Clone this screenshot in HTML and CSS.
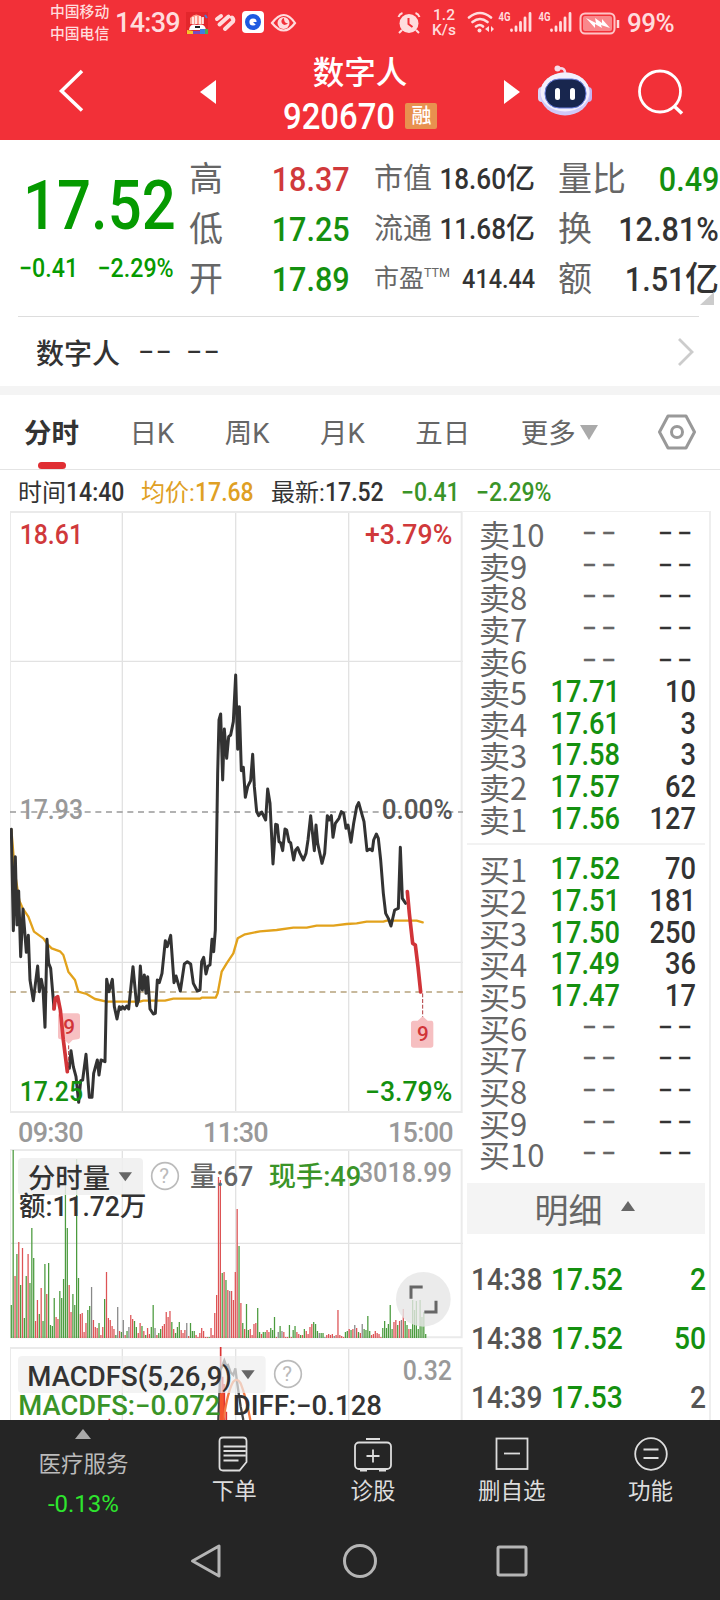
FILE: index.html
```html
<!DOCTYPE html>
<html lang="zh-CN">
<head>
    <meta charset="utf-8">
    <title>数字人 920670</title>
    <link rel="stylesheet" href="styles.css">
</head>
<body>
<header class="top">
    <div class="status">
        <div class="carrier">中国移动<br>中国电信</div>
        <div class="clock">14:39</div>
        <svg class="notif" width="112" height="24" viewBox="185 10 112 24">
            <rect x="186" y="12" width="22" height="22" fill="#e3262c"/>
            <path d="M190 18q6-7 13 0v6h-13z" fill="#ff9a8a"/>
            <path d="M193 17v7M196 16v8M200 16v8M203 17v7" stroke="#fff" stroke-width="1.5"/>
            <path d="M189 30q1-7 8-5 8-2 9 5z" fill="#fff"/>
            <path d="M195 27h5" stroke="#222" stroke-width="2"/>
            <path d="M187 34v-4l6 1v3z" fill="#f5c52c"/>
            <path d="M193 34v-3h7v3z" fill="#7a4ac0"/>
            <path d="M200 34v-5h5v5z" fill="#3f7de0"/>
            <path d="M205 34v-5h3v5z" fill="#4caf50"/>
            <path d="M205 15l2 3" stroke="#4a7ad8" stroke-width="2"/>
            <g fill="none" stroke="#ffdcdd" stroke-width="4" stroke-linecap="round">
                <path d="M217 19l4-3M219.500 24.500l9-8M225 29l8-7.500q1-2-1-4"/>
            </g>
            <rect x="242" y="11" width="22" height="22" rx="4" fill="#fff"/>
            <circle cx="253" cy="22" r="5.8" fill="none" stroke="#1f5ae0" stroke-width="4.4"/>
            <path d="M253 22h4v4" fill="#1f5ae0"/>
            <path d="M272 23q12-16 23 0-11 15-23 0z" fill="none" stroke="#ffdcdd" stroke-width="2.2"/>
            <circle cx="283.500" cy="23" r="6" fill="#ffdcdd"/>
            <path d="M284 18a3.500 3.500 0 1 0 4 5q-4 1-4-5z" fill="#f23038"/>
        </svg>
        <svg class="alarm" width="24" height="24" viewBox="397 11 24 24">
            <circle cx="409" cy="23.500" r="9.500" fill="#ffdcdd"/>
            <path d="M398.500 17q1-3 4-4M419.500 17q-1-3-4-4M402 30l-3 3M416 30l3 3" fill="none" stroke="#ffdcdd" stroke-width="2"/>
            <path d="M408.500 18v6l4 3" fill="none" stroke="#f23038" stroke-width="2"/>
        </svg>
        <div class="speed">1.2<br>K/s</div>
        <svg class="signal" width="154" height="26" viewBox="467 9 154 26">
            <g fill="none" stroke="#ffdcdd" stroke-width="2.600" stroke-linecap="round">
                <path d="M469 17.500q11-9 22 0M472.500 22q7.500-6 15 0M476 26.500q4-3 7 0"/>
            </g>
            <circle cx="479.500" cy="30.500" r="2" fill="#ffdcdd"/>
            <path d="M489 26l-4 3 4 3zM491 26l3 3-3 3z" fill="#ffdcdd"/>
            <g stroke="#ffdcdd" stroke-width="2.800" stroke-linecap="round">
                <path d="M511.500 30v.5M516 27v3.500M520.500 22.500v8M525 18v12.500M530 13.500v17"/>
                <path d="M551.500 30v.5M556 27v3.500M560.500 22.500v8M565 18v12.500M570 13.500v17"/>
            </g>
            <text class="g4" x="498.500" y="20.500" textLength="12" lengthAdjust="spacingAndGlyphs">4G</text>
            <text class="g4" x="538.500" y="20.500" textLength="12" lengthAdjust="spacingAndGlyphs">4G</text>
            <rect x="580.500" y="13.500" width="34" height="20" rx="4.500" fill="none" stroke="#ffc4c6" stroke-width="2"/>
            <rect x="583" y="16" width="29" height="15" rx="2" fill="#f9888c"/>
            <path d="M586 18l10 5-1-5 7 5v-4l8 9-9-3 1 3-7-4v4z" fill="#fff"/>
            <path d="M618 20v8" stroke="#ffdcdd" stroke-width="2.500"/>
        </svg>
        <div class="percent">99%</div>
    </div>
    <div class="titlebar">
        <svg class="back" width="30" height="44" viewBox="56 69 30 44">
            <path d="M82 71L61.500 91 82 110.500" fill="none" stroke="#fff" stroke-width="3.500"/>
        </svg>
        <svg class="prev" width="16" height="24"><path d="M16 0v24L0 12z" fill="#fff"/></svg>
        <div class="stock">
            <div class="name">数字人</div>
            <div class="code"><span class="num">920670</span><span class="tag">融</span></div>
        </div>
        <svg class="next" width="16" height="24"><path d="M0 0v24l16-12z" fill="#fff"/></svg>
        <svg class="robot" width="56" height="54" viewBox="537 63 56 54">
            <path d="M557 69q9-3 8 6" fill="none" stroke="#f4d8ea" stroke-width="2.500"/>
            <circle cx="557.500" cy="68.500" r="3" fill="#f6dcea"/>
            <rect x="538" y="87" width="8" height="15" rx="4" fill="#d8d4f8"/>
            <rect x="584" y="87" width="8" height="15" rx="4" fill="#c4b4f0"/>
            <ellipse cx="565" cy="94" rx="25" ry="21.500" fill="#cfc9f8"/>
            <ellipse cx="565" cy="92" rx="24.500" ry="19.500" fill="#f3effc"/>
            <rect x="545" y="79" width="41" height="29" rx="14" fill="#18264e" stroke="#6a7fe0"/>
            <rect x="555" y="88" width="5" height="12" rx="2.500" fill="#fff"/>
            <rect x="570" y="88" width="5" height="12" rx="2.500" fill="#fff"/>
        </svg>
        <svg class="search" width="48" height="48" viewBox="637 68 48 48">
            <circle cx="660" cy="91.500" r="20.500" fill="none" stroke="#fff" stroke-width="2.800"/>
            <path d="M674 106l8 7.500" stroke="#fff" stroke-width="3.500"/>
        </svg>
    </div>
</header>

<section class="quote">
    <div class="last">
        <div class="price"><span class="num">17.52</span></div>
        <div class="change"><span class="num">−0.41</span><span class="num right">−2.29%</span></div>
    </div>
    <dl class="col c1">
        <dt>高</dt><dd class="up"><span class="num right">18.37</span></dd>
        <dt>低</dt><dd class="down"><span class="num right">17.25</span></dd>
        <dt>开</dt><dd class="down"><span class="num right">17.89</span></dd>
    </dl>
    <dl class="col c2">
        <dt>市值</dt><dd><span class="num right">18.60</span>亿</dd>
        <dt>流通</dt><dd><span class="num right">11.68</span>亿</dd>
        <dt class="small">市盈<sup>TTM</sup></dt><dd class="small"><span class="num right">414.44</span></dd>
    </dl>
    <dl class="col c3">
        <dt>量比</dt><dd class="down"><span class="num right">0.49</span></dd>
        <dt>换</dt><dd><span class="num right">12.81%</span></dd>
        <dt>额</dt><dd><span class="num right">1.51</span>亿</dd>
    </dl>
    <i class="corner"></i>
</section>

<section class="related">
    <span>数字人</span><span class="dash">−−</span><span class="dash">−−</span>
    <svg width="18" height="30"><path d="M2 2l13 13L2 28" fill="none" stroke="#ccc" stroke-width="2.800"/></svg>
</section>

<nav class="tabs">
    <span class="active">分时</span>
    <span>日K</span>
    <span>周K</span>
    <span>月K</span>
    <span>五日</span>
    <span>更多</span>
    <svg class="more" width="18" height="15"><path d="M0 0h18L9 15z" fill="#aaa"/></svg>
    <svg class="gear" width="38" height="36" viewBox="0 0 38 36">
        <path d="M10 2h18l8.500 16L28 34H10L1.500 18z" fill="none" stroke="#999" stroke-width="3" stroke-linejoin="round"/>
        <circle cx="19" cy="18" r="5.500" fill="none" stroke="#999" stroke-width="3"/>
    </svg>
</nav>

<div class="info">
    <span>时间<b class="num">14:40</b></span>
    <span class="avg">均价:<b class="num">17.68</b></span>
    <span>最新:<b class="num">17.52</b></span>
    <span class="green"><b class="num">−0.41</b></span>
    <span class="green"><b class="num">−2.29%</b></span>
</div>

<main>
    <div class="charts">
        <!-- price line, 3 units to a pixel -->
        <svg width="453" height="602" viewBox="30 -447 1359 1806">
            <g class="grid">
                <path d="M367-447V1359M707-447V1359M1046-447V1359M30 4H1389M30 907H1389"/>
                <path class="frame" d="M30-444H1385V1356H30z"/>
            </g>
            <path d="M30 456H1389" stroke="#999" stroke-width="5" stroke-dasharray="18 14"/>
            <path d="M30 996H1389" stroke="#b7a37c" stroke-width="4.500" stroke-dasharray="18 14"/>
            <g fill="none" stroke-linejoin="round" stroke-linecap="round">
                <polyline stroke="#e2a21c" stroke-width="7" points="34,508 45,640 58,722 68,745 85,770 102,815 130,835 142,852 155,865 180,874 190,885 205,935 225,960 235,995 260,1002 285,1017 320,1025 420,1025 430,1022 495,1022 520,1016 600,1016 605,1013 647,1013 653,1000 665,935 680,910 700,880 713,835 735,823 780,814 830,810 880,803 920,803 950,797 1000,797 1040,792 1070,790 1100,785 1150,785 1160,782 1250,782 1268,787"/>
                <g stroke="#333" stroke-width="9">
                    <polyline points="34,508 40,812 46,590 51,795 56,693 62,890 69,747 79,877 85,826 90,960 100,1022 107,965 113,918 118,995 124,958 129,985 135,1102 141,838 146,910 152,925 162,1045"/>
                    <polyline points="208,1225 213,1172 220,1220 228,1250 236,1327 242,1262 248,1260 258,1183 268,1312 276,1312 281,1240 292,1200 297,1245 303,1200 315,1205 320,958 327,995 337,958 343,1040 351,1077 358,1040 363,1048 368,1040 374,1047 380,1038 386,1047 399,920 410,1037 416,1020 421,918 427,990 433,945 438,1000 443,950 450,1047 460,1062 466,1060 472,960 478,968 486,940 496,842 502,860 512,826 522,968 528,948 541,993 553,912 562,905 572,912 580,970 592,993 600,990 605,905 611,892 618,942 624,918 630,915 636,838 641,875 646,810 648,660 653,340 657,180 662,162 668,360 673,207 680,295 686,230 692,225 700,185 707,45 713,268 718,140 724,332 730,322 736,412 743,380 752,362 758,283 763,380 770,455 776,467 785,456 797,480 803,387 810,430 819,612 827,493 832,495 837,545 842,548 848,572 855,507 860,510 867,545 872,548 881,600 887,570 893,563 900,580 910,600 918,580 924,540 932,467 943,572 948,495 953,550 966,610 974,580 982,467 988,480 994,467 999,532 1006,490 1017,475 1024,455 1031,460 1038,505 1044,495 1053,547 1061,490 1070,440 1076,428 1085,460 1092,485 1101,572 1110,567 1117,572 1121,540 1129,522 1135,535 1142,600 1150,700 1157,760 1165,775 1173,798 1184,750 1195,745 1201,562 1207,715 1217,730"/>
                </g>
                <g stroke="#d13438" stroke-width="11">
                    <polyline points="162,1047 166,1015 173,1010 181,1050 190,1140 202,1235"/>
                    <polyline points="1222,695 1228,760 1238,850 1246,855 1254,920 1262,996"/>
                </g>
            </g>
            <path d="M182 1060h50q8 0 8 8v64q0 6-8 6l-14 2-12 12-12-12-12-2q-8 0-8-6v-64q0-8 8-8z" fill="#e63c41" fill-opacity=".32"/>
            <path d="M1241 1082h12l15-13 15 13h12q5 0 5 8v65q0 8-8 8h-51q-8 0-8-8v-65q0-8 8-8z" fill="#f6bfc1"/>
            <path d="M206 1156v76M1268 1000v70" stroke="#b0383c" stroke-width="3" stroke-dasharray="12 5"/>
            <text class="nine" x="190" y="1122">9</text>
            <text class="nine" x="1251" y="1144">9</text>
            <g class="axis">
                <text x="59" y="-348" textLength="190" class="up">18.61</text>
                <text x="1095" y="-348" textLength="262" class="up">+3.79%</text>
                <text x="59" y="476" textLength="190" fill="#999">17.93</text>
                <text x="1145" y="476" textLength="213" fill="#555">0.00%</text>
                <text x="59" y="1322" textLength="190" class="down">17.25</text>
                <text x="1095" y="1322" textLength="262" class="down">−3.79%</text>
            </g>
        </svg>
        <div class="times"><span>09:30</span><span>11:30</span><span>15:00</span></div>

        <!-- volume, bars are filled in by chart.js -->
        <svg width="453" height="190" viewBox="30 117 1359 570">
            <g class="grid">
                <path d="M367 117V683M707 117V683M1046 117V683M30 400H1389"/>
                <path class="frame" d="M30 120H1385V682H30z"/>
            </g>
            <g id="bars"></g>
            <rect x="54" y="144" width="375" height="111" rx="12" fill="#eee" fill-opacity=".85"/>
            <path d="M356 187h40l-20 27z" fill="#666"/>
            <circle cx="495" cy="198" r="40" class="help"/>
            <text x="478" y="219" class="q">?</text>
            <g class="axis">
                <text x="84" y="235" textLength="246" fill="#333">分时量</text>
                <text x="570" y="228" textLength="190" fill="#666">量:67</text>
                <text x="806" y="228" textLength="278" class="green">现手:49</text>
                <text x="1076" y="215" textLength="280" fill="#999">3018.99</text>
                <text x="57" y="318" textLength="382" fill="#333">额:11.72万</text>
            </g>
            <circle cx="1270" cy="568" r="82" fill="#e6e6e6" fill-opacity=".8"/>
            <path d="M1233 566v-35h35M1308 572v34h-35" fill="none" stroke="#666" stroke-width="9"/>
        </svg>

        <svg class="macd" width="453" height="73" viewBox="30 711 1359 219">
            <g class="grid">
                <path d="M367 711V930M707 711V930M1046 711V930"/>
                <path class="frame" d="M30 940V714H1385V940"/>
            </g>
            <path d="M662 711V930M668 800V930M673 822V930M679 905V930M328 926v4" stroke="#dc3434" stroke-width="5"/>
            <path d="M655 930L661 780 667 768 673 752 679 768 684 765 692 787 700 795 706 775 712 822 722 890 730 930" fill="none" stroke="#444" stroke-width="7"/>
            <path d="M670 930Q684 840 700 815 711 802 722 820 738 860 751 930" fill="none" stroke="#f47b45" stroke-width="7"/>
            <path d="M662 850V930M668 850V930" stroke="#f4552e" stroke-width="6"/>
            <rect x="54" y="738" width="743" height="111" rx="12" fill="#eee" fill-opacity=".7"/>
            <path d="M724 781h40l-20 27z" fill="#666"/>
            <circle cx="864" cy="792" r="40" class="help"/>
            <text x="847" y="813" class="q">?</text>
            <g class="axis latin">
                <text x="82" y="829" textLength="614" fill="#333">MACDFS(5,26,9)</text>
                <text x="55" y="914" textLength="606" class="green">MACDFS:−0.072</text>
                <text x="698" y="914" textLength="448" fill="#333">DIFF:−0.128</text>
            </g>
            <g class="axis"><text x="1208" y="809" textLength="148" fill="#999">0.32</text></g>
        </svg>
    </div>

    <div class="book">
        <div class="level"><span>卖10</span><i>−−</i><i>−−</i></div>
        <div class="level"><span>卖9</span><i>−−</i><i>−−</i></div>
        <div class="level"><span>卖8</span><i>−−</i><i>−−</i></div>
        <div class="level"><span>卖7</span><i>−−</i><i>−−</i></div>
        <div class="level"><span>卖6</span><i>−−</i><i>−−</i></div>
        <div class="level"><span>卖5</span><b>17.71</b><b>10</b></div>
        <div class="level"><span>卖4</span><b>17.61</b><b>3</b></div>
        <div class="level"><span>卖3</span><b>17.58</b><b>3</b></div>
        <div class="level"><span>卖2</span><b>17.57</b><b>62</b></div>
        <div class="level"><span>卖1</span><b>17.56</b><b>127</b></div>
        <hr>
        <div class="level"><span>买1</span><b>17.52</b><b>70</b></div>
        <div class="level"><span>买2</span><b>17.51</b><b>181</b></div>
        <div class="level"><span>买3</span><b>17.50</b><b>250</b></div>
        <div class="level"><span>买4</span><b>17.49</b><b>36</b></div>
        <div class="level"><span>买5</span><b>17.47</b><b>17</b></div>
        <div class="level"><span>买6</span><i>−−</i><i>−−</i></div>
        <div class="level"><span>买7</span><i>−−</i><i>−−</i></div>
        <div class="level"><span>买8</span><i>−−</i><i>−−</i></div>
        <div class="level"><span>买9</span><i>−−</i><i>−−</i></div>
        <div class="level"><span>买10</span><i>−−</i><i>−−</i></div>
        <div class="detail">明细<svg width="14" height="10"><path d="M0 10h14L7 0z" fill="#666"/></svg></div>
        <div class="trade"><span>14:38</span><b>17.52</b><b class="down">2</b></div>
        <div class="trade"><span>14:38</span><b>17.52</b><b class="down">50</b></div>
        <div class="trade"><span>14:39</span><b>17.53</b><b>2</b></div>
    </div>
</main>

<footer>
    <div class="actions">
        <div class="sector">
            <svg width="16" height="10"><path d="M0 10h16L8 0z" fill="#aaa"/></svg>
            <div>医疗服务</div>
            <div class="pct">-0.13%</div>
        </div>
        <div class="action">
            <svg width="40" height="36" viewBox="0 0 40 36">
                <path d="M9 1.500h20q3.500 0 3.500 3.500v21l-7 8.500H9q-3.500 0-3.500-3.500V5Q5.500 1.500 9 1.500zM9.500 10.500h22M9.500 15h22M9.500 19.500h22M9.500 24.500h15"/>
            </svg>
            <span>下单</span>
        </div>
        <div class="action">
            <svg width="40" height="36" viewBox="0 0 40 36">
                <rect x="2" y="6.500" width="36" height="26.500" rx="4"/>
                <path d="M13 3h14M7 34.500h7M26 34.500h7M13.500 20h13M20 13.500v13"/>
            </svg>
            <span>诊股</span>
        </div>
        <div class="action">
            <svg width="40" height="36" viewBox="0 0 40 36">
                <rect x="4.500" y="2.500" width="31" height="30.500"/>
                <path d="M12 17.500h16"/>
            </svg>
            <span>删自选</span>
        </div>
        <div class="action">
            <svg width="40" height="36" viewBox="0 0 40 36">
                <circle cx="20" cy="18" r="15.800"/>
                <path d="M12.500 13.500h15M12.500 22h15"/>
            </svg>
            <span>功能</span>
        </div>
    </div>
    <div class="system">
        <svg width="40" height="40" viewBox="0 0 40 40"><path d="M31 5v30L4.500 20z" stroke-linejoin="round"/></svg>
        <svg width="40" height="40" viewBox="0 0 40 40"><circle cx="20" cy="20" r="15.500"/></svg>
        <svg width="40" height="40" viewBox="0 0 40 40"><rect x="6" y="6" width="28" height="28" rx="1.500"/></svg>
    </div>
</footer>
<script src="chart.js"></script>
</body>
</html>
```

FILE: styles.css
```css
* {
    box-sizing: border-box;
}

body {
    margin: 0;
    width: 720px;
    height: 1600px;
    overflow: hidden;
    background: #fff;
    color: #333;
    font-family: Roboto, "Noto Sans CJK SC", sans-serif;
}

svg {
    display: block;
    flex: none;
}

/* figures are set a little condensed */
.num {
    display: inline-block;
    font-weight: 500;
    transform: scaleX(.9);
    transform-origin: left;
}

.num.right {
    transform-origin: right;
}

.up {
    color: #d0393b;
    fill: #d0393b;
}

.down {
    color: #14900f;
    fill: #14900f;
}

.green {
    color: #3a9428;
    fill: #3a9428;
}

/* header */
.top {
    height: 140px;
    background: #f23038;
    color: #fff;
}

.status {
    display: flex;
    height: 46px;
    padding-left: 50px;
    color: #ffdcdd;
}

.carrier {
    width: 65px;
    padding-top: 1px;
    font-size: 14.8px;
    font-weight: 500;
    line-height: 22px;
}

.clock {
    width: 70px;
    font-size: 27px;
    font-weight: 500;
    line-height: 47px;
    letter-spacing: -.7px;
}

.notif {
    margin-top: 10px;
}

.alarm {
    margin: 11px 0 0 100px;
}

.speed {
    width: 46px;
    padding-top: 8px;
    text-align: center;
    font-size: 15.500px;
    font-weight: 500;
    line-height: 14.500px;
}

.signal {
    margin-top: 9px;
}

.g4 {
    font-size: 12px;
    font-weight: 700;
    fill: #ffdcdd;
}

.percent {
    padding-left: 6px;
    font-size: 26px;
    line-height: 47px;
    letter-spacing: -.5px;
    font-weight: 500;
}

.titlebar {
    display: flex;
    height: 94px;
    padding-left: 56px;
}

.back {
    margin-top: 23px;
}

.prev {
    margin: 34px 0 0 114px;
}

.stock {
    width: 288px;
    text-align: center;
}

.name {
    margin-top: 8px;
    font-size: 31.500px;
    font-weight: 500;
    line-height: 40px;
}

.code {
    display: flex;
    padding-left: 67px;
    font-size: 36.500px;
    line-height: 46px;
}

.tag {
    width: 32px;
    height: 26px;
    margin: 9px 0 0 -2px;
    border-radius: 2px;
    background: #e8914f;
    font-size: 20px;
    font-weight: 500;
    line-height: 27px;
}

.next {
    margin-top: 34px;
}

.robot {
    margin: 17px 0 0 17px;
}

.search {
    margin: 22px 0 0 44px;
}

/* quote */
.quote {
    position: relative;
    display: flex;
    height: 176px;
}

.last {
    width: 174px;
    padding: 20px 0 0 23px;
    color: #059a00;
}

.price {
    font-size: 68px;
    line-height: 92px;
}

.price .num {
    transform: scaleX(.88);
}

.change {
    display: flex;
    justify-content: space-between;
    margin-left: -4px;
    font-size: 25.500px;
    line-height: 32px;
}

.change .num {
    transform: scaleX(.91);
}

.col {
    display: grid;
    grid-template-columns: 34px 1fr;
    grid-template-rows: repeat(3, 50px);
    align-items: center;
    margin: 14px 0 0;
    line-height: 50px;
    white-space: nowrap;
}

.col dt {
    color: #666;
}

.col dd {
    margin: 0;
    text-align: right;
    font-weight: 500;
}

.c1 {
    width: 161px;
    margin-left: 15px;
    font-size: 34px;
}

.c2 {
    grid-template-columns: 52px 1fr;
    width: 161px;
    margin-left: 24px;
    font-size: 29px;
}

.c3 {
    width: 161px;
    margin-left: 23px;
    font-size: 34px;
}

.c2 .small {
    font-size: 26px;
}

.c2 dt.small {
    font-size: 25px;
}

sup {
    font-family: Roboto;
    font-size: 12.500px;
    font-weight: 400;
    line-height: 0;
    vertical-align: 10px;
}

.corner {
    position: absolute;
    right: 6px;
    bottom: 11px;
    border-left: 14px solid transparent;
    border-bottom: 13px solid #ccc;
}

.related {
    display: flex;
    align-items: center;
    height: 70px;
    margin: 0 21px 0 18px;
    padding: 1px 4px 0 18px;
    border-top: 1px solid #ddd;
    font-size: 28px;
    font-weight: 500;
}

.related .dash {
    width: 48px;
    font-size: 29px;
    font-weight: 400;
    letter-spacing: 1px;
}

.related span:first-child {
    width: 102px;
}

.related svg {
    margin-left: auto;
}

/* tabs */
.tabs {
    display: flex;
    align-items: center;
    height: 84px;
    padding-left: 24px;
    border-top: 9px solid #f4f4f4;
    border-bottom: 1px solid #e4e4e4;
    color: #666;
    font-size: 27.500px;
    gap: 50.500px;
}

.tabs span {
    height: 74px;
    line-height: 78px;
    white-space: nowrap;
}

.tabs .active {
    position: relative;
    color: #333;
    font-weight: 700;
}

.tabs .active::after {
    position: absolute;
    left: 14px;
    bottom: 0;
    width: 28px;
    height: 7px;
    border-radius: 4px;
    background: #e02e33;
    content: "";
}

.more {
    margin-left: -46px;
}

.gear {
    margin-left: 9px;
}

.info {
    display: flex;
    height: 41px;
    padding-left: 18px;
    font-size: 24px;
    line-height: 45px;
    white-space: nowrap;
}

.info .num {
    font-size: 25px;
    transform: scaleX(.92);
}

.info span {
    width: 130px;
}

.info span:first-child {
    width: 123px;
}

.info .avg {
    color: #dfa024;
}

.info .green {
    width: 75px;
}

/* charts and order book */
main {
    display: flex;
    height: 909px;
    overflow: hidden;
}

.charts {
    width: 453px;
    margin-left: 10px;
}

.grid path {
    fill: none;
    stroke: #e2e2e2;
    stroke-width: 4;
}

.grid .frame {
    stroke: #eaeaea;
    stroke-width: 6;
}

.axis text {
    font-size: 81px;
    font-weight: 500;
}

.nine {
    fill: #d13438;
    font-size: 62px;
    font-weight: 500;
}

.help {
    fill: #fff;
    stroke: #bbb;
    stroke-width: 5;
}

.q {
    fill: #bbb;
    font-size: 62px;
}

.times {
    display: flex;
    justify-content: space-between;
    height: 36px;
    padding: 0 10px 0 8px;
    color: #999;
    font-size: 27px;
    font-weight: 500;
    line-height: 40px;
    letter-spacing: -.7px;
}

.macd {
    margin-top: 8px;
}

.book {
    width: 248px;
    padding: 6px 4px 0;
    border: solid #eee;
    border-width: 1px 2px 0 0;
}

.level {
    display: grid;
    grid-template-columns: 60px 81px 76px;
    height: 31.650px;
    margin-left: 12px;
    font-size: 31px;
    line-height: 32px;
}

.level span {
    color: #666;
    font-family: "Noto Sans CJK SC", sans-serif;
    font-size: 31px;
    line-height: 31.650px;
    white-space: nowrap;
}

.level i,
.level b {
    font-style: normal;
    font-weight: 500;
    text-align: right;
    transform: scaleX(.88);
    transform-origin: right;
}

.level i {
    font-weight: 400;
    letter-spacing: 4px;
}

.level b:nth-child(2) {
    color: #14900f;
}

.level i:nth-child(2) {
    color: #666;
}

.book hr {
    height: 2px;
    margin: 9px 0 8px;
    border: 0;
    background: #f2f2f2;
}

.detail {
    display: flex;
    align-items: center;
    justify-content: center;
    gap: 18px;
    height: 51px;
    margin: 13px 0 16px;
    padding-right: 3px;
    background: #f4f4f4;
    color: #666;
    font-size: 34px;
}

.detail svg {
    margin-bottom: 4px;
}

.trade {
    display: grid;
    grid-template-columns: 80px 76px 79px;
    height: 59px;
    padding-left: 4px;
    color: #555;
    font-size: 32px;
    line-height: 59px;
}

.trade span,
.trade b {
    font-weight: 500;
    transform: scaleX(.88);
    transform-origin: left;
}

.trade b:last-child {
    text-align: right;
    transform-origin: right;
}

.trade b:nth-child(2) {
    color: #14900f;
}

/* bottom */
footer {
    height: 180px;
    background: #252525;
    color: #ddd;
    font-size: 22.500px;
}

.actions {
    display: flex;
    height: 104px;
    padding-left: 14px;
}

.actions > div {
    display: flex;
    flex-direction: column;
    align-items: center;
    width: 139px;
}

.sector {
    padding-top: 9px;
    color: #bbb;
    line-height: 40px;
}

.sector div:nth-child(2) {
    margin-top: 5px;
}

.sector .pct {
    color: #2ee52e;
    font-size: 24px;
}

.sector + .action {
    margin-left: 12px;
}

.action {
    padding-top: 16px;
}

.action span {
    line-height: 39px;
}

.action svg,
.system svg {
    fill: none;
    stroke: #ddd;
    stroke-width: 1.800;
}

.system {
    display: flex;
    gap: 112px;
    padding: 17px 0 0 188px;
}

.system svg {
    stroke: #b5b5b5;
    stroke-width: 3;
}
```

FILE: chart.js
```js
// one entry per minute: colour key + height in px
var volume = 'g33 g188 r62 g84 r96 g53 r90 g20 g62 r84 g55 g110 g80 r17 r38 g24 r50 g17 g74 r44 g75 g13 g12 g40 r21 r19 g47 g40 g59 g164 g110 r53 r26 g44 g33 g179 g60 r24 r25 r6 r15 g28 g32 k51 r18 r11 r10 g15 r3 r11 g39 r66 r20 r18 r12 r9 g3 k31 r7 g6 k18 r3 g7 k11 r23 r19 g17 g11 r5 r15 g12 r7 g3 r10 r4 g11 g33 k10 r3 g5 g9 r12 r14 r26 r21 r27 g16 r9 g5 g11 g16 r8 r5 r8 k15 r2 g15 g7 g7 r3 r1 r5 r10 r7 r1 r1 g1 r10 r3 r25 r43 r161 r158 g65 r66 g58 r48 k47 r47 r38 r66 r129 g92 r35 g15 r9 g34 g8 r9 r3 r14 r15 g30 g6 r4 g6 g6 r8 r6 g10 g8 g21 r1 k6 g12 k7 r6 r1 r1 g13 r1 g8 g12 r6 r4 g3 r3 g9 r7 r4 r11 r14 g16 g14 g7 k5 g5 g5 k1 r3 r4 r3 r4 k2 r3 r28 r3 r2 r1 g6 g7 r9 g8 r9 k13 r10 g6 r5 k14 g9 g8 g22 g7 r3 r4 r7 r5 r4 r1 g10 g17 g10 g14 g33 g9 r16 r18 g13 r17 k18 r29 g17 g13 r9 g9 g38 g28 g37 g9 g38 g21 g26 g4';
var colors = {r: '#dd5355', g: '#4b9b3e', k: '#888'};
var bars = document.getElementById('bars');

volume.split(' ').forEach(function (item, i) {
    var bar = document.createElementNS('http://www.w3.org/2000/svg', 'rect');
    var h = item.slice(1) * 3;
    bar.setAttribute('x', 32 + i * 5.6);
    bar.setAttribute('y', 684 - h);
    bar.setAttribute('width', 3.8);
    bar.setAttribute('height', h);
    bar.setAttribute('fill', colors[item[0]]);
    bars.appendChild(bar);
});

document.querySelectorAll('.axis text').forEach(function (text) {
    text.setAttribute('lengthAdjust', 'spacingAndGlyphs');
});
```
